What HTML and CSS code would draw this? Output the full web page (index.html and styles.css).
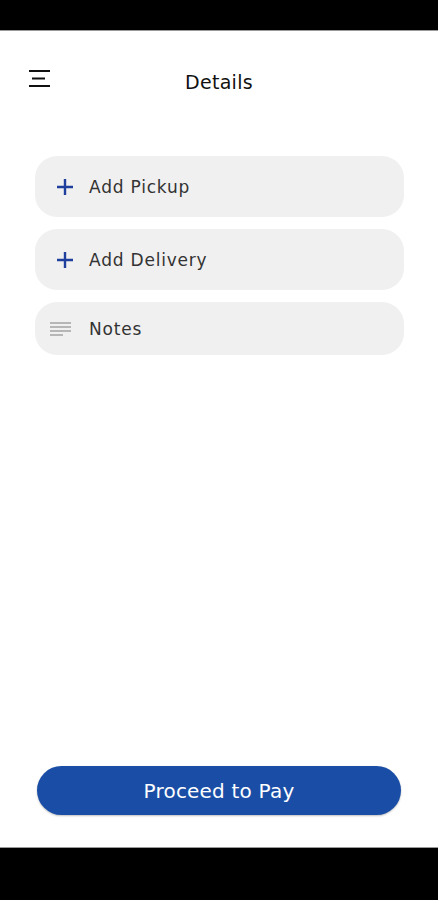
FILE: index.html
```html
<!DOCTYPE html>
<html lang="en">
<head>
	<meta charset="UTF-8">
	<title>Details</title>
	<link rel="stylesheet" href="styles.css">
</head>
<body>
	<div class="screen">
		<div class="status-bar"></div>

		<div class="header">
			<span class="menu-btn">
				<svg width="22" height="18" viewBox="0 0 22 18">
					<path d="M0 1h21M3 8.5h13M0 16h21" stroke="#111" stroke-width="2" fill="none"/>
				</svg>
			</span>
			<h1 class="title">Details</h1>
		</div>

		<ul class="list">
			<li class="item">
				<svg class="ico" width="18" height="18" viewBox="0 0 18 18">
					<path d="M9 1v16M1 9h16" stroke="#1f3f9c" stroke-width="2.4" fill="none"/>
				</svg>
				<span>Add Pickup</span>
			</li>
			<li class="item">
				<svg class="ico" width="18" height="18" viewBox="0 0 18 18">
					<path d="M9 1v16M1 9h16" stroke="#1f3f9c" stroke-width="2.4" fill="none"/>
				</svg>
				<span>Add Delivery</span>
			</li>
			<li class="item item-notes">
				<svg class="ico ico-notes" width="22" height="14" viewBox="0 0 22 14">
					<path d="M0 1h21M0 5h21M0 9h21M0 13h13" stroke="#a2a2a2" stroke-width="1.3" fill="none"/>
				</svg>
				<span>Notes</span>
			</li>
		</ul>

		<div class="footer">
			<button class="pay-btn">Proceed to Pay</button>
		</div>

		<div class="nav-bar"></div>
	</div>
</body>
</html>
```
FILE: styles.css
```css
* { box-sizing:border-box; }
body { margin:0;font-family:"DejaVu Sans","Noto Sans",sans-serif;color:#222;background:#fff; }
ul { margin:0;padding:0;list-style:none; }

.screen { display:flex;flex-direction:column;height:900px; }

.status-bar { height:31px;background:#000;border-bottom:1px solid #9a9a9a;flex:none; }

.header { position:relative;height:100px;display:flex;align-items:center;justify-content:center;padding-top:2px; }
.menu-btn { position:absolute;left:29px;top:39px;display:flex; }
.title { margin:0;font-size:19px;font-weight:500;letter-spacing:0.3px;color:#111; }

.list { flex:1;padding:25px 34px 0 35px;display:flex;flex-direction:column;gap:12px; }
.item { height:61px;background:#f0f0f0;border-radius:22px;display:flex;align-items:center;padding-left:21px;font-size:17px;color:#333;letter-spacing:0.8px; }
.item .ico { margin-right:15px;flex:none; }
.item-notes { height:53px;padding-left:15px; }
.item-notes .ico { margin-right:17px; }

.footer { padding:0 37px 32px;flex:none; }
.pay-btn { display:block;width:100%;height:49px;border:0;border-radius:25px;background:#1a4ea6;color:#fff;font-family:inherit;font-size:20px;letter-spacing:0.2px;box-shadow:0 1px 2px rgba(0,0,0,0.25); }

.nav-bar { height:53px;background:#000;border-top:1px solid #9a9a9a;flex:none; }
```
